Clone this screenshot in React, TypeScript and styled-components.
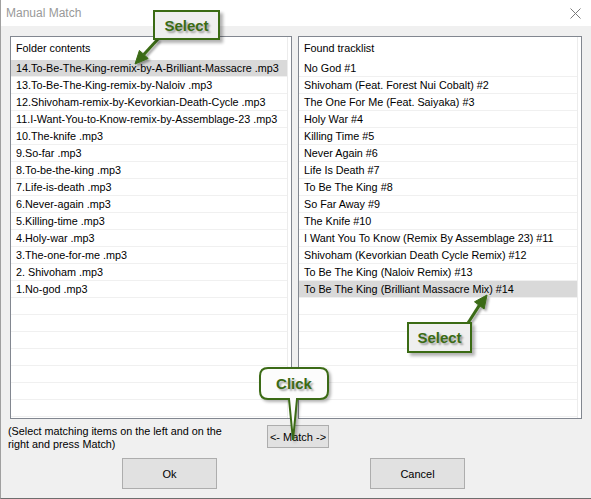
import React from "react";
import styled, { createGlobalStyle } from "styled-components";

const Global = createGlobalStyle`
  html, body { margin: 0; padding: 0; background: #f0f0f0; }
  body { font-family: "Liberation Sans", Arial, sans-serif; }
`;

const GREEN = "#3b6b14";

const Window = styled.div`
  position: relative;
  width: 591px;
  height: 499px;
  box-sizing: border-box;
  border-left: 1px solid #a0a0a0;
  border-bottom: 1px solid #6e6e6e;
  background: #f0f0f0;
  display: flex;
  flex-direction: column;
  overflow: hidden;
  font-family: "Liberation Sans", Arial, sans-serif;
  font-size: 10.8px;
  color: #000;
`;

const TitleBar = styled.div`
  flex: none;
  height: 26px;
  background: #fff;
  display: flex;
  align-items: center;
  justify-content: space-between;
  padding: 0 10px 0 5px;
`;

const Title = styled.span`
  font-size: 12px;
  color: #999;
`;

const Body = styled.div`
  display: flex;
  flex-direction: column;
  padding: 10px 9px 0 9px;
`;

const Panels = styled.div`
  display: grid;
  grid-template-columns: 282px 284px;
  column-gap: 6px;
  height: 383px;
`;

const Panel = styled.div`
  box-sizing: border-box;
  border: 1px solid #828790;
  background: #fff;
  overflow: hidden;
  display: flex;
`;

const Column = styled.div`
  flex: 1;
  min-width: 0;
  margin-right: 3px;
  border-right: 1px solid #ececec;
  display: flex;
  flex-direction: column;
`;

const Header = styled.div`
  flex: none;
  height: 23px;
  line-height: 23px;
  padding-left: 5px;
  white-space: nowrap;
`;

const Row = styled.div<{ $selected?: boolean }>`
  flex: none;
  height: 16px;
  line-height: 16px;
  padding-left: 5px;
  border-bottom: 1px solid #f0f0f0;
  white-space: nowrap;
  background: ${(p) => (p.$selected ? "#d9d9d9" : "transparent")};
`;

const HintRow = styled.div`
  display: grid;
  grid-template-columns: 259px auto;
  align-items: start;
  margin: 6px 0 0 -2px;
`;

const Hint = styled.div`
  line-height: 13px;
`;

const Button = styled.button<{ $w: number; $h: number }>`
  box-sizing: border-box;
  width: ${(p) => p.$w}px;
  height: ${(p) => p.$h}px;
  padding: 0;
  margin: 0;
  background: #e1e1e1;
  border: 1px solid #adadad;
  font-family: "Liberation Sans", Arial, sans-serif;
  font-size: 11px;
  color: #000;
`;

const ButtonRow = styled.div`
  display: flex;
  gap: 153px;
  margin-top: 7px;
  padding-left: 112px;
`;

const Overlay = styled.div`
  position: absolute;
  top: 0;
  left: -1px;
  width: 591px;
  height: 499px;
  pointer-events: none;
`;

const ArrowLayer = styled.svg`
  position: absolute;
  inset: 0;
`;

const SelectBox = styled.div<{ $x: number; $y: number; $w: number; $h: number }>`
  position: absolute;
  left: ${(p) => p.$x}px;
  top: ${(p) => p.$y}px;
  width: ${(p) => p.$w}px;
  height: ${(p) => p.$h}px;
  box-sizing: border-box;
  border: 2px solid ${GREEN};
  background: #efefef;
  box-shadow: 3px 3px 3px rgba(0, 0, 0, 0.3);
  display: flex;
  align-items: center;
  justify-content: center;
`;

const CalloutText = styled.span`
  font-family: "Liberation Sans", Arial, sans-serif;
  font-weight: bold;
  font-size: 15px;
  color: ${GREEN};
  text-shadow: 2px 2px 2px rgba(0, 0, 0, 0.35);
`;

const ClickCallout = styled.div`
  position: absolute;
  left: 258px;
  top: 366px;
  width: 78px;
  height: 80px;
`;

const BubbleShape = styled.svg`
  position: absolute;
  inset: 0;
  overflow: visible;
`;

const BubbleLabel = styled.div`
  position: absolute;
  left: 2px;
  top: 2px;
  width: 68px;
  height: 31px;
  display: flex;
  align-items: center;
  justify-content: center;
`;

const left = [
  "14.To-Be-The-King-remix-by-A-Brilliant-Massacre .mp3",
  "13.To-Be-The-King-remix-by-Naloiv .mp3",
  "12.Shivoham-remix-by-Kevorkian-Death-Cycle .mp3",
  "11.I-Want-You-to-Know-remix-by-Assemblage-23 .mp3",
  "10.The-knife .mp3",
  "9.So-far .mp3",
  "8.To-be-the-king .mp3",
  "7.Life-is-death .mp3",
  "6.Never-again .mp3",
  "5.Killing-time .mp3",
  "4.Holy-war .mp3",
  "3.The-one-for-me .mp3",
  "2. Shivoham .mp3",
  "1.No-god .mp3",
];

const right = [
  "No God #1",
  "Shivoham (Feat. Forest Nui Cobalt) #2",
  "The One For Me (Feat. Saiyaka) #3",
  "Holy War #4",
  "Killing Time #5",
  "Never Again #6",
  "Life Is Death #7",
  "To Be The King #8",
  "So Far Away #9",
  "The Knife #10",
  "I Want You To Know (Remix By Assemblage 23) #11",
  "Shivoham (Kevorkian Death Cycle Remix) #12",
  "To Be The King (Naloiv Remix) #13",
  "To Be The King (Brilliant Massacre Mix) #14",
];

const TOTAL_ROWS = 22;

function List({ title, items, selected }: { title: string; items: string[]; selected: number }) {
  const rows = [...items];
  while (rows.length < TOTAL_ROWS) rows.push("");
  return (
    <Panel>
      <Column>
        <Header>{title}</Header>
        {rows.map((t, i) => (
          <Row key={i} $selected={i === selected}>
            {t || "\u00a0"}
          </Row>
        ))}
      </Column>
    </Panel>
  );
}

function CloseIcon() {
  return (
    <svg width="11" height="11" viewBox="0 0 11 11">
      <path d="M0.5 0.5 L10.5 10.5 M10.5 0.5 L0.5 10.5" stroke="#7a7a7a" strokeWidth="1" fill="none" />
    </svg>
  );
}

export default function App() {
  return (
    <>
      <Global />
      <Window>
        <TitleBar>
          <Title>Manual Match</Title>
          <CloseIcon />
        </TitleBar>
        <Body>
          <Panels>
            <List title="Folder contents" items={left} selected={0} />
            <List title="Found tracklist" items={right} selected={13} />
          </Panels>
          <HintRow>
            <Hint>
              (Select matching items on the left and on the
              <br />
              right and press Match)
            </Hint>
            <Button $w={62} $h={23}>&lt;- Match -&gt;</Button>
          </HintRow>
          <ButtonRow>
            <Button $w={95} $h={31}>Ok</Button>
            <Button $w={95} $h={31}>Cancel</Button>
          </ButtonRow>
        </Body>

        <Overlay>
          <ArrowLayer width="591" height="499" viewBox="0 0 591 499">
            <defs>
              <filter id="sh" x="-50%" y="-50%" width="200%" height="200%">
                <feDropShadow dx="2" dy="2" stdDeviation="1.2" floodColor="#000" floodOpacity="0.35" />
              </filter>
            </defs>
            <g filter="url(#sh)" stroke={GREEN} fill={GREEN}>
              <line x1="158" y1="39" x2="143.8" y2="54.4" strokeWidth="3" />
              <polygon points="135,64 148.2,58.5 139.4,50.4" strokeWidth="1" />
              <line x1="468" y1="323" x2="479.3" y2="305.4" strokeWidth="3" />
              <polygon points="487,295 484.1,309 474.5,301.8" strokeWidth="1" />
            </g>
          </ArrowLayer>

          <SelectBox $x={153} $y={10} $w={67} $h={30}>
            <CalloutText>Select</CalloutText>
          </SelectBox>
          <SelectBox $x={407} $y={322} $w={65} $h={31}>
            <CalloutText>Select</CalloutText>
          </SelectBox>

          <ClickCallout>
            <BubbleShape width="78" height="80" viewBox="0 0 78 80">
              <defs>
                <filter id="bsh" x="-30%" y="-30%" width="160%" height="160%">
                  <feDropShadow dx="2" dy="2" stdDeviation="1.5" floodColor="#000" floodOpacity="0.3" />
                </filter>
              </defs>
              <path
                d="M10 2 H62 Q70 2 70 10 V25 Q70 33 62 33 H39 L35 74 L31 33 H10 Q2 33 2 25 V10 Q2 2 10 2 Z"
                fill="#fcfcfc"
                stroke={GREEN}
                strokeWidth="2"
                filter="url(#bsh)"
              />
            </BubbleShape>
            <BubbleLabel>
              <CalloutText>Click</CalloutText>
            </BubbleLabel>
          </ClickCallout>
        </Overlay>
      </Window>
    </>
  );
}
